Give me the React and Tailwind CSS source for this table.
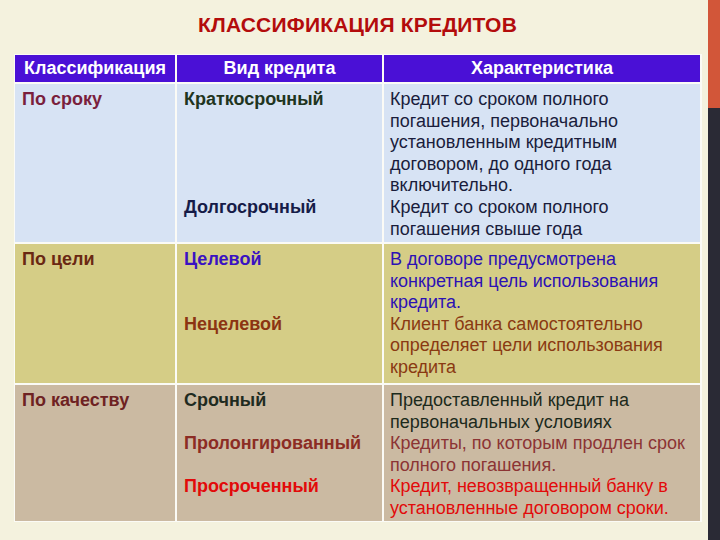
import React from "react";

const rows = [
  {
    bg: "bg-[#d7e3f4]",
    name: "По сроку",
    nameColor: "text-[#7a1f3d]",
    kinds: [
      { text: "Краткосрочный", color: "text-[#1f3520]", mt: "" },
      { text: "Долгосрочный", color: "text-[#161c48]", mt: "mt-[86px]" },
    ],
    desc: [
      {
        color: "text-[#1a1d3c]",
        text: "Кредит со сроком полного погашения, первоначально установленным кредитным договором, до одного года включительно.",
      },
      { color: "text-[#1a1d3c]", text: "Кредит со сроком полного погашения свыше года" },
    ],
  },
  {
    bg: "bg-[#d5cd86]",
    name: "По цели",
    nameColor: "text-[#6a2812]",
    kinds: [
      { text: "Целевой", color: "text-[#3a12c2]", mt: "" },
      { text: "Нецелевой", color: "text-[#8c3412]", mt: "mt-[43px]" },
    ],
    desc: [
      { color: "text-[#2c12b4]", text: "В договоре предусмотрена конкретная цель использования кредита." },
      { color: "text-[#8a3a12]", text: "Клиент банка самостоятельно определяет цели использования кредита" },
    ],
  },
  {
    bg: "bg-[#cbbaa2]",
    name: "По качеству",
    nameColor: "text-[#6e2222]",
    kinds: [
      { text: "Срочный", color: "text-[#1f2b1f]", mt: "" },
      { text: "Пролонгированный", color: "text-[#8c2c24]", mt: "mt-[21.6px]" },
      { text: "Просроченный", color: "text-[#e20a0a]", mt: "mt-[21.6px]" },
    ],
    desc: [
      { color: "text-[#1c2a1c]", text: "Предоставленный кредит на первоначальных условиях" },
      { color: "text-[#8c3434]", text: "Кредиты, по которым продлен срок полного погашения." },
      { color: "text-[#e20a0a]", text: "Кредит, невозвращенный банку в установленные договором сроки." },
    ],
  },
];

const heights = ["h-[158px]", "h-[139px]", "h-[136px]"];

export default function App() {
  return (
    <div
      className="flex w-[720px] h-[540px] overflow-hidden"
      style={{ fontFamily: '"Liberation Sans", Arial, sans-serif' }}
    >
      <div className="w-[708px] h-full bg-[#f4f2de] flex flex-col">
        <h1 className="mt-[13px] ml-[15px] w-[685px] text-center text-[21px] leading-[24px] font-bold text-[#b30c0c] tracking-[0.2px]">
          КЛАССИФИКАЦИЯ КРЕДИТОВ
        </h1>
        <div className="mt-[17px] ml-[14px] w-[688px] bg-[#fbfbf6] p-[1px] grid grid-cols-[160px_205px_316px] gap-[2px] text-[18px] leading-[21.6px]">
          <div className="h-[27px] bg-[#4a10d6] text-white font-bold flex items-center justify-center">
            Классификация
          </div>
          <div className="h-[27px] bg-[#4a10d6] text-white font-bold flex items-center justify-center">
            Вид кредита
          </div>
          <div className="h-[27px] bg-[#4a10d6] text-white font-bold flex items-center justify-center">
            Характеристика
          </div>
          {rows.map((r, i) => (
            <React.Fragment key={i}>
              <div className={`${r.bg} ${heights[i]} px-[7px] pt-[5px] font-bold ${r.nameColor}`}>
                {r.name}
              </div>
              <div className={`${r.bg} ${heights[i]} px-[7px] pt-[5px] flex flex-col items-start`}>
                {r.kinds.map((k, j) => (
                  <div key={j} className={`font-bold ${k.color} ${k.mt}`}>
                    {k.text}
                  </div>
                ))}
              </div>
              <div className={`${r.bg} ${heights[i]} pl-[6px] pr-[4px] pt-[5px]`}>
                {r.desc.map((d, j) => (
                  <p key={j} className={d.color}>
                    {d.text}
                  </p>
                ))}
              </div>
            </React.Fragment>
          ))}
        </div>
      </div>
      <div className="w-[12px] h-full flex flex-col">
        <div className="h-[108px] bg-[#d25639]" />
        <div className="flex-1 bg-[#2a2a35]" />
      </div>
    </div>
  );
}
